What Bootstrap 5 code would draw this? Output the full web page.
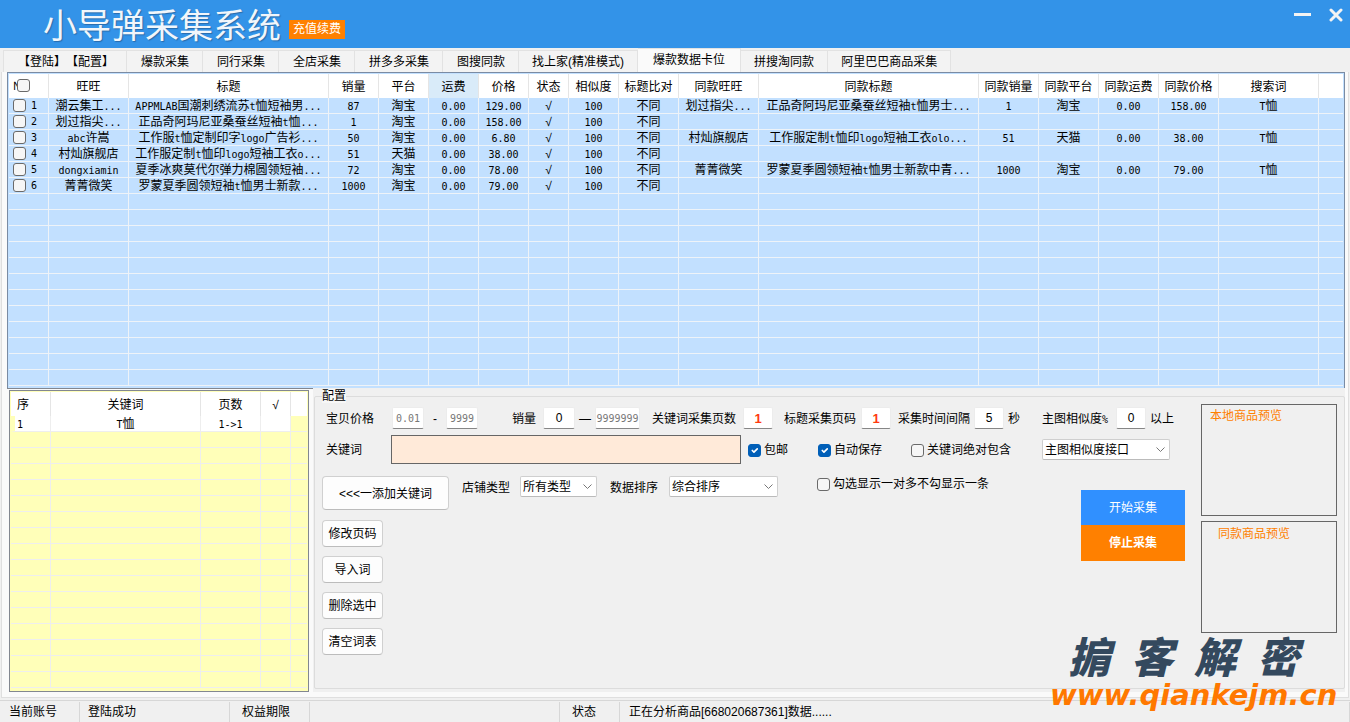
<!DOCTYPE html>
<html lang="zh-CN">
<head>
<meta charset="utf-8">
<meta name="viewport" content="width=device-width, initial-scale=1">
<title>小导弹采集系统</title>
<link href="https://cdn.jsdelivr.net/npm/bootstrap@5.3.0/dist/css/bootstrap.min.css" rel="stylesheet">
<style>
body { font: 12px/16px "Liberation Sans", "Noto Sans CJK SC", sans-serif; color: #000; background: #f0f0f0; }
.title-bar { height: 48px; background: #3393e8; padding-left: 43px; }
.title-bar h1 { font: 400 34px/40px "Noto Sans CJK SC", sans-serif; color: #f1f6fb; text-shadow: 1px 1px 1px #2a6cab; }
.renew-btn { margin: 20px 0 0 8px; width: 56px; height: 19px; background: #ff8000; font-size: 12px; line-height: 17px; }
.win-btn { width: 18px; height: 18px; line-height: 0; margin-top: 2px; }
/* tabs */
.tab-strip { height: 24px; padding: 0 0 0 3px; }
.tab-strip .nav-link { height: 22px; padding: 3px 13px 0 14px; color: #000; background: #f3f3f3; border: 1px solid #e2e2e2; border-width: 1px 1px 0 0; border-radius: 0; white-space: nowrap; }
.tab-strip .nav-link.active { height: 24px; padding: 3px 15px 0 15px; background: #fafafa; color: #000; }
.tab-strip .tab-wide { padding: 3px 13px 0 13px; }
.tab-strip .tab-first { padding: 3px 12px 0 14px; border-left-width: 1px; min-width: 124px; font-kerning: none; text-spacing-trim: space-all; font-feature-settings: "chws" 0, "kern" 0; }
.pane { margin: 0 1px 2px; border: 1px solid #dfdfdf; border-top: 0; background: #fafafa; padding-bottom: 5px; }
/* grids */
.grid-box { border: 1px solid #828790; padding: 1px 1px 0; }
.grid-table { table-layout: fixed; width: 100%; border-collapse: separate; border-spacing: 0; text-align: center; }
.grid-table th { height: 24px; padding: 1px 0 0; font-weight: 400; background: #fff; border-right: 1px solid #e5e5e5; white-space: nowrap; }
.grid-table td { height: 16px; padding: 1px 0 0; line-height: 14px; border: 1px solid #eef3f8; border-width: 0 1px 1px 0; white-space: nowrap; overflow: hidden; }
.grid-table th:last-child, .grid-table td:last-child { border-right: 0; }
.main-grid { margin: 0 3px 0 5px; background: #c2e0ff; border-color: #7a8ba3; border-bottom: 0; padding-bottom: 2px; }
.main-grid th.sorted { background: #d9ebf9; }
.word-col { width: 306px; border-top: 1px solid #828790; margin-left: 5px; padding: 1px 4px 0 2px; }
.word-grid { background: #ffffb9; height: 302px; }
.word-grid td { border-color: #eeeeee; }
.word-grid tr.filled td { background: #fff; }
.word-grid tr.filled td:last-child { background: transparent; }
.word-grid tr.filled td:first-child { border-left: 4px solid #ffffb9; }
.word-grid th:first-child, .word-grid td:first-child { text-align: left; padding-left: 2px; }
.word-grid th:first-child { padding-left: 6px; }
.mono { font: 10px/12px "DejaVu Sans Mono", monospace; }
/* form */
.form-check-input.tick { width: 13px; height: 13px; margin: 0; border: 1px solid #6a6a6a; border-radius: 3px; background-color: #f6f6f6; flex: none; box-shadow: none; }
.form-check-input.tick:checked { background-color: #005fb8; border-color: #005fb8; }
.row-tick { display: flex; align-items: center; padding-left: 4px; gap: 5px; margin-top: -1px; }
.row-tick.all { gap: 0; margin-top: -3px; }
.row-tick.all .tick { position: relative; z-index: 1; }
.row-no { width: 4px; padding-top: 1px; }
.setup-area { background: #f0f0f0; padding: 1px 0 3px 1px; margin-right: 3px; }
.setup-box { border: 1px solid #dcdcdc; height: 100%; padding: 0 7px; border-radius: 2px; }
.setup-box legend { font-size: 12px; line-height: 14px; padding: 0; margin: 0; float: none; width: auto; background: #f7f7f7; }
.fields { display: grid; align-items: center; height: 22px; margin-top: 4px; padding-left: 4px;
  grid-template-columns: 66px 32px 22px 32px 34px 31px 32px 20px 45px 12px 91px 30px 11px 77px 30px 7px 76px 30px 4px 34px 74px 30px 4px 24px; }
.fields label, .fields span, .key-row label { white-space: nowrap; padding-top: 1px; }
.num-box { width: 100%; height: 22px; padding: 0; text-align: center; background: #fff; border: 1px solid #ececec; border-bottom: 1px solid #868686; border-radius: 2px; font: 12px/18px "Liberation Sans", sans-serif; color: #000; }
.num-box.faint { font: 10px/18px "DejaVu Sans Mono", monospace; color: #777; }
.num-box.hot { font-size: 13px; font-weight: 700; color: #ff3a10; }
.key-row { display: grid; align-items: center; height: 29px; margin-top: 6px; padding-left: 4px; grid-template-columns: 65px 350px 7px 70px 93px 131px 128px; }
.key-box { height: 29px; width: 100%; background: #ffead9; border: 1px solid #666; border-radius: 0; padding: 0 4px; }
.pick { height: 21px; padding: 0 20px 0 2px; font: 12px/18px "Liberation Sans", "Noto Sans CJK SC", sans-serif; color: #000; background-color: #fff; border: 1px solid #cfcfcf; border-bottom-color: #bbb; border-radius: 2px; background-size: 9px 9px; background-position: right 4px center; background-image: url("data:image/svg+xml,%3csvg xmlns='http://www.w3.org/2000/svg' viewBox='0 0 9 9'%3e%3cpath fill='none' stroke='%23777' d='M0.5 2.5l4 4 4-4'/%3e%3c/svg%3e"); }
.check-line { display: flex; align-items: center; gap: 3px; white-space: nowrap; }
.order-row .check-line { margin-top: 1px; }
.tool-btn { width: 61px; height: 27px; padding: 2px 0 0; font-size: 12px; line-height: 23px; color: #000; background: #fdfdfd; border: 1px solid #d0d0d0; border-bottom-color: #bcbcbc; border-radius: 4px; }
.tool-btn.wide { width: 127px; height: 34px; }
.order-row { display: grid; grid-template-columns: 140px 58px 77px 13px 59px 109px 39px auto; margin-bottom: 10px; line-height: 24px; }
.tool-stack { row-gap: 9px; }
.run-col { width: 104px; margin-top: 26px; }
.run-btn { height: 35px; border: 0; border-radius: 0; color: #fff; font-size: 12px; padding: 0; }
.run-start { background: #3090ff; }
.run-stop { background: #ff8000; font-weight: 700; height: 36px; }
.preview-col { margin: 1px 0 0 16px; row-gap: 5px; }
.preview { width: 136px; height: 112px; border: 1px solid #666; color: #ff8000; padding: 3px 8px; }
/* status and brand mark */
.status-bar { border-top: 1px solid #d7d7d7; height: 22px; line-height: 20px; }
.status-bar > div { flex: none; border-right: 1px solid #d7d7d7; margin-top: 1px; padding-left: 9px; white-space: nowrap; }
.status-bar .st-s { width: 80px; }
.status-bar .st-m { width: 150px; padding-left: 8px; }
.status-bar .st-l { width: 250px; }
.status-bar .st-state { width: 60px; }
.status-bar .st-in { padding-left: 12px; }
.brand-mark { right: 9px; bottom: 12px; width: 291px; pointer-events: none; }
.brand-name { font: italic 900 42px/42px "Noto Sans CJK SC", sans-serif; color: #34495e; padding-left: 18px; margin-bottom: 4px; white-space: nowrap; }
.brand-url { font: italic 700 29px/30px "DejaVu Sans", sans-serif; color: #ff7800; white-space: nowrap; }
</style>
</head>
<body class="d-flex flex-column min-vh-100 position-relative">
<header class="title-bar d-flex text-white">
  <h1 class="m-0 pt-1">小导弹采集系统</h1>
  <div><button class="renew-btn btn p-0 border-0 rounded-0 text-white d-block">充值续费</button></div>
  <div class="ms-auto d-flex gap-3 pe-1 pt-1">
    <button class="win-btn btn p-0 border-0" aria-label="最小化"><svg width="18" height="14" viewBox="0 0 18 14"><path d="M0 6.5H17" stroke="#f3f3f3" stroke-width="3"/></svg></button>
    <button class="win-btn btn p-0 border-0" aria-label="关闭"><svg width="18" height="14" viewBox="0 0 18 14"><path d="M3 2L13 12M13 2L3 12" stroke="#f3f3f3" stroke-width="3" stroke-linecap="round"/></svg></button>
  </div>
</header>

<nav class="tab-strip nav flex-nowrap align-items-end">
  <a class="nav-link tab-first" href="#">【登陆】【配置】</a>
  <a class="nav-link" href="#">爆款采集</a>
  <a class="nav-link" href="#">同行采集</a>
  <a class="nav-link" href="#">全店采集</a>
  <a class="nav-link" href="#">拼多多采集</a>
  <a class="nav-link" href="#">图搜同款</a>
  <a class="nav-link tab-wide" href="#">找上家(精准模式)</a>
  <a class="nav-link active" href="#">爆款数据卡位</a>
  <a class="nav-link tab-wide" href="#">拼搜淘同款</a>
  <a class="nav-link tab-wide" href="#">阿里巴巴商品采集</a>
</nav>

<main class="pane flex-grow-1 d-flex flex-column">
  <div class="grid-box main-grid">
    <table class="grid-table">
      <colgroup id="mainCols"></colgroup>
      <thead><tr id="mainHead"></tr></thead>
      <tbody id="mainBody"></tbody>
    </table>
  </div>

  <div class="d-flex flex-grow-1">
    <div class="word-col flex-shrink-0">
      <div class="grid-box word-grid">
        <table class="grid-table">
          <colgroup><col width="40"><col width="150"><col width="60"><col width="30"><col></colgroup>
          <thead><tr><th>序</th><th>关键词</th><th>页数</th><th>√</th><th></th></tr></thead>
          <tbody id="wordBody"></tbody>
        </table>
      </div>
    </div>

    <div class="setup-area flex-grow-1">
      <fieldset class="setup-box">
        <legend>配置</legend>
        <div class="d-flex">
          <div class="flex-grow-1">
            <div class="fields">
              <label for="pMin">宝贝价格</label><input id="pMin" class="num-box faint" value="0.01">
              <span class="text-center">-</span><input class="num-box faint" value="9999" aria-label="最高价格"><i></i>
              <label for="sMin">销量</label><input id="sMin" class="num-box" value="0">
              <span class="text-center">—</span><input class="num-box faint" value="9999999" aria-label="最高销量"><i></i>
              <label for="kp">关键词采集页数</label><input id="kp" class="num-box hot" value="1"><i></i>
              <label for="tp">标题采集页码</label><input id="tp" class="num-box hot" value="1"><i></i>
              <label for="gap">采集时间间隔</label><input id="gap" class="num-box" value="5"><i></i>
              <span>秒</span>
              <label for="sim">主图相似度<span class="mono">%</span></label><input id="sim" class="num-box" value="0"><i></i>
              <span>以上</span>
            </div>
            <div class="key-row">
              <label for="kw">关键词</label><input id="kw" class="key-box"><i></i>
              <label class="check-line"><input type="checkbox" class="form-check-input tick" checked>包邮</label>
              <label class="check-line"><input type="checkbox" class="form-check-input tick" checked>自动保存</label>
              <label class="check-line"><input type="checkbox" class="form-check-input tick">关键词绝对包含</label>
              <select class="form-select pick" aria-label="接口"><option>主图相似度接口</option></select>
            </div>
            <div class="d-flex">
              <div class="flex-grow-1 pt-2 mt-1">
                <div class="order-row">
                  <button class="btn tool-btn wide">&lt;&lt;&lt;一添加关键词</button>
                  <label for="shop">店铺类型</label>
                  <select id="shop" class="form-select pick"><option>所有类型</option></select><i></i>
                  <label for="sort">数据排序</label>
                  <select id="sort" class="form-select pick"><option>综合排序</option></select><i></i>
                  <label class="check-line align-self-start lh-sm"><input type="checkbox" class="form-check-input tick">勾选显示一对多不勾显示一条</label>
                </div>
                <div class="tool-stack d-flex flex-column">
                  <button class="btn tool-btn">修改页码</button>
                  <button class="btn tool-btn">导入词</button>
                  <button class="btn tool-btn">删除选中</button>
                  <button class="btn tool-btn">清空词表</button>
                </div>
              </div>
              <div class="run-col d-flex flex-column">
                <button class="btn run-btn run-start">开始采集</button>
                <button class="btn run-btn run-stop">停止采集</button>
              </div>
            </div>
          </div>
          <div class="preview-col d-flex flex-column">
            <div class="preview">本地商品预览</div>
            <div class="preview ps-3 pt-1">同款商品预览</div>
          </div>
        </div>
      </fieldset>
    </div>
  </div>
</main>

<footer class="status-bar d-flex">
  <div class="st-s">当前账号</div>
  <div class="st-m">登陆成功</div>
  <div class="st-s st-in">权益期限</div>
  <div class="st-l"></div>
  <div class="st-state st-in">状态</div>
  <div class="flex-grow-1">正在分析商品[668020687361]数据......</div>
</footer>

<div class="brand-mark position-absolute">
  <div class="brand-name">掮&ensp;客&ensp;解&ensp;密</div>
  <div class="brand-url">www.qiankejm.cn</div>
</div>

<script>
const cols = [["№",40],["旺旺",80],["标题",200],["销量",50],["平台",50],["运费",50],["价格",50],["状态",40],["相似度",50],["标题比对",60],["同款旺旺",80],["同款标题",220],["同款销量",60],["同款平台",60],["同款运费",60],["同款价格",60],["搜索词",100],["",0]];
const rows = [
 ["潮云集工...","APPMLAB国潮刺绣流苏t恤短袖男...","87","淘宝","0.00","129.00","√","100","不同","划过指尖...","正品奇阿玛尼亚桑蚕丝短袖t恤男士...","1","淘宝","0.00","158.00","T恤"],
 ["划过指尖...","正品奇阿玛尼亚桑蚕丝短袖t恤...","1","淘宝","0.00","158.00","√","100","不同"],
 ["abc许嵩","工作服t恤定制印字logo广告衫...","50","淘宝","0.00","6.80","√","100","不同","村灿旗舰店","工作服定制t恤印logo短袖工衣olo...","51","天猫","0.00","38.00","T恤"],
 ["村灿旗舰店","工作服定制t恤印logo短袖工衣o...","51","天猫","0.00","38.00","√","100","不同"],
 ["dongxiamin","夏季冰爽莫代尔弹力棉圆领短袖...","72","淘宝","0.00","78.00","√","100","不同","菁菁微笑","罗蒙夏季圆领短袖t恤男士新款中青...","1000","淘宝","0.00","79.00","T恤"],
 ["菁菁微笑","罗蒙夏季圆领短袖t恤男士新款...","1000","淘宝","0.00","79.00","√","100","不同"]
];
// Latin runs use the half-width face
const mix = s => (s || "").replace(/[!-~]+/g, m => `<span class="mono">${m.replace(/>/g, "&gt;")}</span>`);
const tick = name => `<input type="checkbox" class="form-check-input tick" aria-label="${name}">`;
const $ = id => document.getElementById(id);
$("mainCols").innerHTML = cols.map(c => c[1] ? `<col width="${c[1]}">` : "<col>").join("");
$("mainHead").innerHTML = cols.map((c, i) => i ? `<th${c[0] === "运费" ? ' class="sorted"' : ""}>${c[0]}</th>`
  : `<th><div class="row-tick all"><span class="row-no">${c[0]}</span>${tick("全选")}</div></th>`).join("");
let html = "";
for (let r = 0; r < 18; r++) {
  const d = rows[r];
  html += "<tr><td>" + (d ? `<div class="row-tick">${tick("第" + (r + 1) + "行")}<span class="mono">${r + 1}</span></div>` : "") + "</td>";
  for (let c = 0; c < 17; c++) html += `<td>${d ? mix(d[c]) : ""}</td>`;
  html += "</tr>";
}
$("mainBody").innerHTML = html;
$("wordBody").innerHTML = `<tr class="filled"><td>${mix("1")}</td><td>${mix("T恤")}</td><td>${mix("1->1")}</td><td></td><td></td></tr>`
  + "<tr><td></td><td></td><td></td><td></td><td></td></tr>".repeat(16);
</script>
<script src="https://cdn.jsdelivr.net/npm/bootstrap@5.3.0/dist/js/bootstrap.bundle.min.js"></script>
</body>
</html>
